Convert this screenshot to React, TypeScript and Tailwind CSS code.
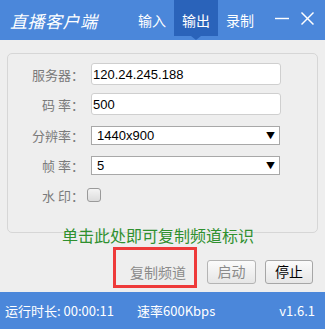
import React from "react";

const cjk = { fontFamily: '"Noto Sans CJK SC", "Noto Sans", sans-serif' };
const arial = { fontFamily: '"Liberation Sans", Arial, sans-serif' };

function Label({ children }: { children: React.ReactNode }) {
  return (
    <div className="w-[76px] shrink-0 text-right text-[13px] text-[#7a7a7a] leading-none whitespace-pre" style={cjk}>
      {children}
    </div>
  );
}

function Select({ value }: { value: string }) {
  return (
    <div className="ml-[7px] w-[189px] h-[19px] bg-white border border-[#a8a8a8] flex items-center justify-between pl-[5px] pr-[4px]">
      <span className="text-[13px] text-black leading-none" style={arial}>{value}</span>
      <span className="text-[9px] text-black leading-none">▼</span>
    </div>
  );
}

export default function App() {
  return (
    <div className="w-[325px] h-[329px] bg-[#eeeeee] flex flex-col overflow-hidden" style={cjk}>
      {/* Header */}
      <div className="h-[40px] bg-[#4b87da] flex items-start shrink-0">
        <div className="w-[130px] h-[40px] flex items-center pl-[10px]">
          <span className="text-white text-[17px] italic leading-none tracking-[0.5px]" style={cjk}>直播客户端</span>
        </div>
        <div className="flex h-[36px]">
          <div className="w-[44px] h-[36px] pt-[4px] flex items-center justify-center text-white text-[14px]">输入</div>
          <div className="relative w-[44px] h-[36px] pt-[4px] flex items-center justify-center text-white text-[14px] bg-[#2a63ba]">
            输出
            <div className="absolute left-1/2 -translate-x-1/2 top-[36px] w-0 h-0 border-l-[5px] border-r-[5px] border-t-[4px] border-l-transparent border-r-transparent border-t-[#2a63ba]" />
          </div>
          <div className="w-[44px] h-[36px] pt-[4px] flex items-center justify-center text-white text-[14px]">录制</div>
        </div>
        <div className="flex-1 h-[40px] flex items-start justify-end pr-[10px] gap-[10px] pt-[11px]">
          <svg width="16" height="16" viewBox="0 0 16 16">
            <line x1="1" y1="7.5" x2="15" y2="7.5" stroke="white" strokeWidth="1.4" />
          </svg>
          <svg width="15" height="15" viewBox="0 0 15 15">
            <line x1="1.5" y1="1.5" x2="13.5" y2="13.5" stroke="white" strokeWidth="1.5" />
            <line x1="13.5" y1="1.5" x2="1.5" y2="13.5" stroke="white" strokeWidth="1.5" />
          </svg>
        </div>
      </div>

      {/* Panel */}
      <div className="px-[7px] pt-[13px]">
        <div className="h-[180px] border border-[#d6d6d6] rounded-[5px] pt-[9px] flex flex-col">
          <div className="flex items-center h-[22px]">
            <Label>服务器：</Label>
            <div className="ml-[7px] w-[190px] h-[22px] bg-white border border-[#cfcfcf] rounded-[3px] flex items-center pl-[1px]">
              <span className="text-[13px] text-black leading-none" style={arial}>120.24.245.188</span>
            </div>
          </div>
          <div className="flex items-center h-[22px] mt-[8px]">
            <Label>{"码 率："}</Label>
            <div className="ml-[7px] w-[190px] h-[22px] bg-white border border-[#cfcfcf] rounded-[3px] flex items-center pl-[1px]">
              <span className="text-[13px] text-black leading-none" style={arial}>500</span>
            </div>
          </div>
          <div className="flex items-center h-[19px] mt-[11px]">
            <Label>分辨率：</Label>
            <Select value="1440x900" />
          </div>
          <div className="flex items-center h-[19px] mt-[11px]">
            <Label>{"帧 率："}</Label>
            <Select value="5" />
          </div>
          <div className="flex items-center h-[14px] mt-[13px]">
            <Label>{"水 印："}</Label>
            <div className="ml-[3px] w-[14px] h-[14px] rounded-[3px] border border-[#9a9a9a] bg-gradient-to-b from-[#f4f4f4] to-[#dcdcdc]" />
          </div>
        </div>
      </div>

      {/* Green hint */}
      <div className="relative -mt-[8px] h-[20px] flex items-center justify-center pr-[9px]">
        <span className="text-[16px] text-[#2f902f] leading-none" style={cjk}>单击此处即可复制频道标识</span>
      </div>

      {/* Buttons */}
      <div className="mt-[2px] flex items-center pl-[113px]">
        <div className="w-[84px] h-[41px] border-[3px] border-[#ee3a3a] flex items-end justify-center pb-[1px] pl-[6px]">
          <span className="h-[24px] leading-[24px] text-[14px] text-[#8a8a8a]">复制频道</span>
        </div>
        <div className="ml-[10px] mt-[8px] w-[49px] h-[24px] rounded-[3px] border border-[#b4b4b4] bg-gradient-to-b from-[#fbfbfb] to-[#e6e6e6] flex items-center justify-center text-[14px] text-[#8a8a8a]">启动</div>
        <div className="ml-[9px] mt-[8px] w-[48px] h-[24px] rounded-[3px] border border-[#a6a6a6] bg-gradient-to-b from-[#fbfbfb] to-[#e6e6e6] flex items-center justify-center text-[14px] text-black">停止</div>
      </div>

      {/* Status bar */}
      <div className="mt-auto h-[37px] bg-[#4b87da] flex items-center px-[5px] text-white text-[13px]">
        <span className="w-[132px]">运行时长: 00:00:11</span>
        <span>速率600Kbps</span>
        <span className="ml-auto pr-[5px]">v1.6.1</span>
      </div>
    </div>
  );
}
